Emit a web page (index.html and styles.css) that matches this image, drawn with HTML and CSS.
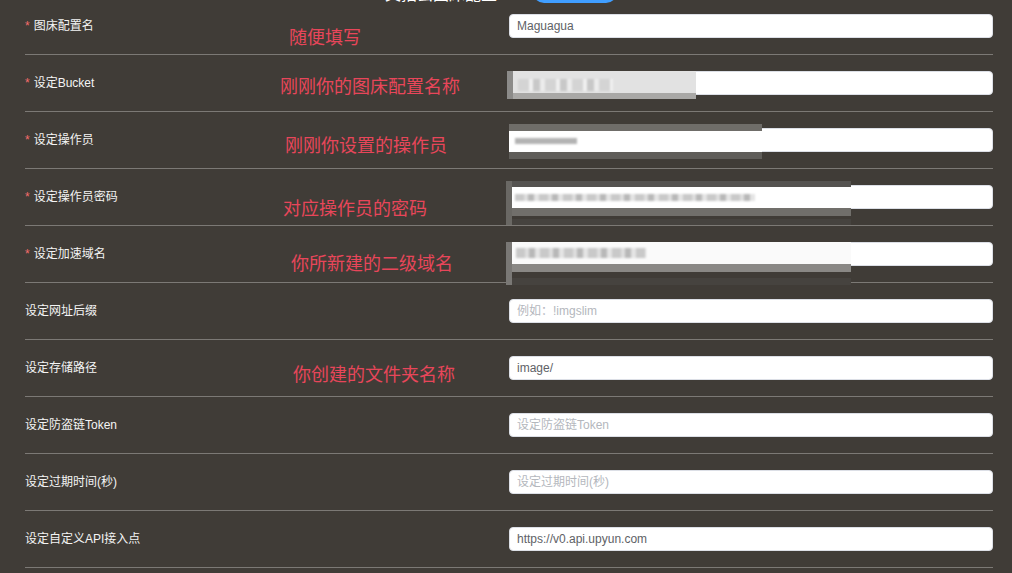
FILE: index.html
```html
<!DOCTYPE html>
<html lang="zh-CN">
<head>
    <meta charset="UTF-8">
    <title>图床配置</title>
    <link rel="stylesheet" href="styles.css">
</head>
<body>
    <div class="top">
        <span class="top-title">又拍云图床配置</span>
        <span class="top-btn">确定</span>
    </div>

    <form class="config">
        <div class="row">
            <label class="name"><span class="req">*</span>图床配置名</label>
            <div class="field">
                <input type="text" value="Maguagua">
            </div>
            <span class="note note-1">随便填写</span>
        </div>

        <div class="row">
            <label class="name"><span class="req">*</span>设定Bucket</label>
            <div class="field">
                <input type="text" value="">
                <div class="mosaic mosaic-bucket"><i class="blur-text"></i></div>
            </div>
            <span class="note note-2">刚刚你的图床配置名称</span>
        </div>

        <div class="row">
            <label class="name"><span class="req">*</span>设定操作员</label>
            <div class="field">
                <input type="text" value="">
                <div class="mosaic mosaic-operator"><i class="blur-text"></i></div>
            </div>
            <span class="note note-3">刚刚你设置的操作员</span>
        </div>

        <div class="row">
            <label class="name"><span class="req">*</span>设定操作员密码</label>
            <div class="field">
                <input type="text" value="">
                <div class="mosaic mosaic-password"><i class="blur-text"></i></div>
            </div>
            <span class="note note-4">对应操作员的密码</span>
        </div>

        <div class="row">
            <label class="name"><span class="req">*</span>设定加速域名</label>
            <div class="field">
                <input type="text" value="">
                <div class="mosaic mosaic-domain"><i class="blur-text"></i></div>
            </div>
            <span class="note note-5">你所新建的二级域名</span>
        </div>

        <div class="row">
            <label class="name">设定网址后缀</label>
            <div class="field">
                <input type="text" placeholder="例如：!imgslim">
            </div>
        </div>

        <div class="row">
            <label class="name">设定存储路径</label>
            <div class="field">
                <input type="text" value="image/">
            </div>
            <span class="note note-7">你创建的文件夹名称</span>
        </div>

        <div class="row">
            <label class="name">设定防盗链Token</label>
            <div class="field">
                <input type="text" placeholder="设定防盗链Token">
            </div>
        </div>

        <div class="row">
            <label class="name">设定过期时间(秒)</label>
            <div class="field">
                <input type="text" placeholder="设定过期时间(秒)">
            </div>
        </div>

        <div class="row">
            <label class="name">设定自定义API接入点</label>
            <div class="field">
                <input type="text" value="https://v0.api.upyun.com">
            </div>
        </div>
    </form>
</body>
</html>
```

FILE: styles.css
```css
body {
    margin: 0;
    background: #403c37;
    font-family: "Liberation Sans", "Noto Sans CJK SC", sans-serif;
    overflow: hidden;
}

/* header sits mostly above the fold, only its bottom edge shows */
.top {
    height: 22px;
    margin-top: -19px;
    margin-bottom: -5px;
    display: flex;
    align-items: flex-end;
    padding-left: 385px;
    gap: 36px;
}
.top-title {
    color: #fff;
    font-size: 16px;
    line-height: 20px;
    margin-bottom: -2px;
}
.top-btn {
    background: #409eff;
    color: #fff;
    font-size: 12px;
    width: 84px;
    height: 22px;
    border-radius: 11px;
    text-align: center;
    line-height: 22px;
}

.config {
    margin: 0 19px 0 25px;
}
.row {
    position: relative;
    display: grid;
    grid-template-columns: 484px 484px;
    align-items: center;
    padding: 16px 0;
    border-bottom: 1px solid #7c7975;
}
.name {
    color: #f4f4f4;
    font-size: 12px;
    line-height: 16px;
}
.req {
    color: #f56c6c;
    margin-right: 4px;
}
.field {
    position: relative;
    height: 24px;
}
.field input {
    box-sizing: border-box;
    width: 100%;
    height: 24px;
    margin: 0;
    padding: 0 7px;
    border: 1px solid #dcdfe6;
    border-radius: 4px;
    background: #fff;
    color: #606266;
    font-family: "Liberation Sans", "Noto Sans CJK SC", sans-serif;
    font-size: 12px;
    outline: none;
}
.field input::placeholder {
    color: #b4b7bd;
}

/* red hand-written notes pasted over the screenshot */
.note {
    position: absolute;
    color: #e8465a;
    font-family: "Noto Sans CJK SC", sans-serif;
    font-size: 18px;
    line-height: 24px;
    white-space: nowrap;
}
.note-1 { left: 264px; top: 26px; }
.note-2 { left: 255px; top: 18px; }
.note-3 { left: 260px; top: 20px; }
.note-4 { left: 258px; top: 26px; }
.note-5 { left: 266px; top: 24px; }
.note-7 { left: 268px; top: 21px; }

/* pixelated blur that hides private values */
.mosaic {
    position: absolute;
}
.blur-text {
    position: absolute;
    height: 9px;
    background: repeating-linear-gradient(90deg, #c9c9c9 0 9px, #dedede 9px 13px, #b8b8b8 13px 19px, #e4e4e4 19px 24px);
    filter: blur(1px);
}
.mosaic-bucket {
    left: -2px;
    top: 0;
    width: 189px;
    height: 28px;
    background: linear-gradient(#e2e2e2 0 22px, #a9a8a6 22px);
    border-left: 6px solid #8c8b89;
    box-sizing: border-box;
}
.mosaic-bucket .blur-text {
    left: 5px;
    top: 8px;
    width: 95px;
    height: 12px;
    background: repeating-linear-gradient(90deg, #d4d4d4 0 11px, #f0f0f0 11px 15px, #c8c8c8 15px 22px, #ececec 22px 27px);
}
.mosaic-operator {
    left: 0;
    top: -4px;
    width: 253px;
    height: 35px;
    background: linear-gradient(#6f6d69 0 7px, #fff 7px 28px, #5f5d59 28px);
}
.mosaic-operator .blur-text {
    left: 6px;
    top: 14px;
    width: 62px;
    height: 6px;
    background: #b3b3b3;
}
.mosaic-password {
    left: -3px;
    top: -4px;
    width: 345px;
    height: 44px;
    background: linear-gradient(#555350 0 6px, #fff 6px 27px, #716f6b 27px 35px, #403c37 35px 38px, #46433f 38px);
    border-left: 6px solid #6a6864;
    box-sizing: border-box;
}
.mosaic-password .blur-text {
    left: 3px;
    top: 13px;
    width: 240px;
    height: 7px;
}
.mosaic-domain {
    left: -3px;
    top: 0;
    width: 345px;
    height: 43px;
    background: linear-gradient(#fafafa 0 22px, #8a8885 22px 30px, #403c37 30px 36px, #46433f 36px);
    border-left: 6px solid #7a7875;
    box-sizing: border-box;
}
.mosaic-domain .blur-text {
    left: 4px;
    top: 6px;
    width: 130px;
    height: 10px;
}
```
